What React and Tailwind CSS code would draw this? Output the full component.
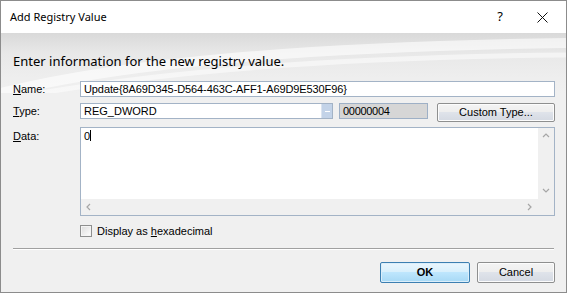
import { useState } from "react";

const ui = { fontFamily: '"Liberation Sans", Arial, sans-serif' };
const segoe = { fontFamily: '"Noto Sans", "Open Sans", sans-serif' };

function Chevron({ dir, className = "" }) {
  const d = {
    up: "M1 5 L4 2 L7 5",
    down: "M1 2 L4 5 L7 2",
    left: "M5 1 L2 4 L5 7",
    right: "M2 1 L5 4 L2 7",
  }[dir];
  return (
    <svg width="8" height="8" viewBox="0 0 8 8" className={className}>
      <path d={d} fill="none" stroke="#a6a6a6" strokeWidth="1.2" />
    </svg>
  );
}

function Label({ letter, rest }) {
  return (
    <div className="w-[67px] text-[11px] text-black leading-[16px]">
      <span className="underline underline-offset-[1px]">{letter}</span>
      {rest}
    </div>
  );
}

function ClassicButton({ children, primary = false, className = "" }) {
  return (
    <button
      className={`rounded-[2px] border text-[11px] text-black flex items-center justify-center ${
        primary
          ? "border-[#3c7fb1] bg-[linear-gradient(#eaf6fd_0%,#d9f0fc_45%,#bee6fd_50%,#a7d9f5_100%)] font-bold shadow-[inset_0_0_0_1px_#dbeefa]"
          : "border-[#8e8f8f] bg-[linear-gradient(#f4f4f4_0%,#eeeeee_45%,#dfe3ea_50%,#d4d9e2_100%)] shadow-[inset_0_0_0_1px_#fcfcfc]"
      } ${className}`}
    >
      {children}
    </button>
  );
}

export default function App() {
  const [hex, setHex] = useState(false);

  return (
    <div className="w-[567px] h-[293px] border border-[#8c8c8c] flex flex-col overflow-hidden bg-[#f0f0f0]" style={ui}>
      <div className="h-[32px] bg-white flex items-center justify-between pl-[9px] pr-[18px] shrink-0">
        <div className="text-[11px] text-black" style={segoe}>
          Add Registry Value
        </div>
        <div className="flex items-center gap-[34px] text-black">
          <span className="text-[13px]" style={segoe}>?</span>
          <svg width="11" height="11" viewBox="0 0 11 11">
            <path d="M0.5 0.5 L10.5 10.5 M10.5 0.5 L0.5 10.5" stroke="#111" strokeWidth="1" />
          </svg>
        </div>
      </div>

      <div className="flex-1 flex flex-col relative bg-[linear-gradient(#d9d9d9_0px,#e8e8e8_20px,#eeeeee_45px,#f0f0f0_60px)]">
        <svg className="absolute inset-x-0 top-0 pointer-events-none" width="565" height="60" viewBox="0 0 565 60">
          <path d="M0 60 C120 30 300 14 565 10" fill="none" stroke="#ffffff" strokeWidth="10" opacity="0.6" />
          <path d="M40 60 C180 36 360 24 565 22" fill="none" stroke="#ffffff" strokeWidth="5" opacity="0.5" />
        </svg>

        <div className="relative pl-[12px] pt-[18px] text-[13px] leading-[20px] text-black" style={segoe}>
          Enter information for the new registry value.
        </div>

        <div className="relative flex flex-col pl-[12px] pr-[11px] mt-[10px]">
          <div className="flex items-center">
            <Label letter="N" rest="ame:" />
            <div className="flex-1 h-[16px] bg-white border border-[#a3b3c6] px-[3px] text-[11px] leading-[14px] tracking-[-0.1px] text-black whitespace-nowrap overflow-hidden">
              Update{"{"}8A69D345-D564-463C-AFF1-A69D9E530F96{"}"}
            </div>
          </div>

          <div className="flex items-start mt-[6px]">
            <Label letter="T" rest="ype:" />
            <div className="w-[253px] h-[16px] bg-white border border-[#a3b3c6] flex items-stretch">
              <div className="flex-1 px-[3px] text-[11px] leading-[14px] text-black">REG_DWORD</div>
              <div className="w-[11px] bg-[#c3d3e8] border-l border-[#dbe4f0] flex items-center justify-center">
                <div className="w-[5px] h-[1px] bg-white" />
              </div>
            </div>
            <div className="ml-[6px] w-[89px] h-[16px] bg-[#d6d6d6] border border-[#9eb0c6] px-[3px] text-[11px] leading-[14px] tracking-[-0.3px] text-black">
              00000004
            </div>
            <ClassicButton className="ml-[9px] flex-1 h-[19px]">Custom Type...</ClassicButton>
          </div>

          <div className="flex items-start mt-[5px]">
            <div className="pt-[1px]">
              <Label letter="D" rest="ata:" />
            </div>
            <div className="flex-1 h-[89px] bg-white border border-[#a3b3c6] grid grid-cols-[1fr_16px] grid-rows-[1fr_16px]">
              <div className="px-[3px] pt-[1px] text-[11px] leading-[14px] text-black">
                0<span className="inline-block w-[1px] h-[11px] bg-black align-[-1px]" />
              </div>
              <div className="bg-[#f0f0f0] flex flex-col items-center justify-between py-[4px]">
                <Chevron dir="up" />
                <Chevron dir="down" />
              </div>
              <div className="bg-[#f0f0f0] flex items-center justify-between px-[4px]">
                <Chevron dir="left" />
                <Chevron dir="right" />
              </div>
              <div className="bg-[#f0f0f0]" />
            </div>
          </div>

          <label className="flex items-center ml-[67px] mt-[8px] gap-[5px] cursor-pointer">
            <input type="checkbox" checked={hex} onChange={() => setHex(!hex)} className="hidden" />
            <span className="w-[12px] h-[12px] border border-[#8e8f8f] bg-[linear-gradient(135deg,#dcdcdc,#fefefe)] shadow-[inset_0_0_0_1px_#f4f4f4]" />
            <span className="text-[11px] leading-[14px] text-black">
              Display as <span className="underline underline-offset-[1px]">h</span>exadecimal
            </span>
          </label>
        </div>

        <div className="relative mx-[12px] mt-[10px] h-[2px] border-t border-[#a0a0a0] border-b-white border-b" />

        <div className="relative flex justify-end gap-[7px] pr-[11px] mt-[12px]">
          <ClassicButton primary className="w-[90px] h-[21px]">OK</ClassicButton>
          <ClassicButton className="w-[78px] h-[21px]">Cancel</ClassicButton>
        </div>
      </div>
    </div>
  );
}
